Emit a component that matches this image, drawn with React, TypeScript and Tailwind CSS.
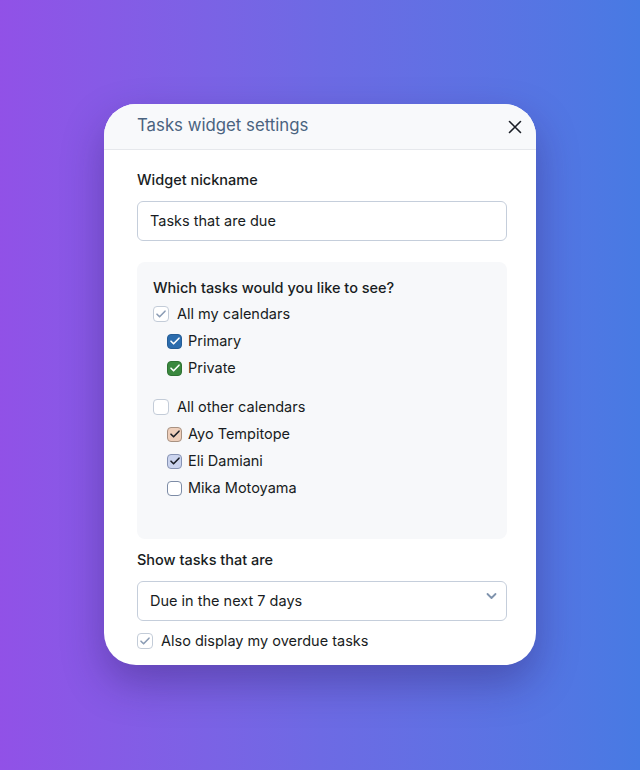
import React from "react";

type Box = {
  bg: string;
  border: string;
  check?: string;
};

function CheckBox({ box, size = 15 }: { box: Box; size?: number }) {
  return (
    <span
      className="flex shrink-0 items-center justify-center rounded-[4px] border"
      style={{ width: size, height: size, background: box.bg, borderColor: box.border }}
    >
      {box.check && (
        <svg width="12" height="12" viewBox="0 0 12 12" fill="none">
          <path d="M2 6.2l2.6 2.6 5.4-5.6" stroke={box.check} strokeWidth="1.6" strokeLinecap="round" strokeLinejoin="round" />
        </svg>
      )}
    </span>
  );
}

const soft: Box = { bg: "#ffffff", border: "#c3ccd8", check: "#8c9db5" };
const empty: Box = { bg: "#ffffff", border: "#c3ccd8" };

function TopRow({ box, label }: { box: Box; label: string }) {
  return (
    <div className="flex h-[22px] items-center gap-[8px]">
      <CheckBox box={box} size={16} />
      <span>{label}</span>
    </div>
  );
}

function SubRow({ box, label }: { box: Box; label: string }) {
  return (
    <div className="flex h-[22px] items-center gap-[6px] pl-[14px]">
      <CheckBox box={box} size={15} />
      <span>{label}</span>
    </div>
  );
}

export default function App() {
  return (
    <div
      className="flex min-h-[770px] w-full justify-center bg-gradient-to-r from-[#9151e7] via-[#6d6ae4] to-[#477ae3] pt-[104px] text-[14.5px] text-[#181c22]"
      style={{ fontFamily: "Inter, 'Noto Sans', sans-serif" }}
    >
      <div className="h-[561px] w-[432px] overflow-hidden rounded-[32px] bg-white shadow-[0_18px_40px_rgba(40,20,90,0.35)]">
        <div className="flex h-[46px] items-start justify-between border-b border-[#e6e8ec] bg-[#f8f9fb] pl-[33px] pr-[14px] pt-[9px]">
          <span className="text-[16.8px] leading-6 text-[#4a6380]">Tasks widget settings</span>
          <svg className="mt-[7px]" width="14" height="14" viewBox="0 0 14 14" fill="none">
            <path d="M1.5 1.5l11 11M12.5 1.5l-11 11" stroke="#1b1f27" strokeWidth="1.6" strokeLinecap="round" />
          </svg>
        </div>

        <div className="pl-[33px] pr-[29px] pt-[19px]">
          <div className="font-medium leading-[22px]">Widget nickname</div>
          <div className="mt-[10px] flex h-[40px] items-center rounded-[6px] border border-[#c5cedb] px-[12px]">
            Tasks that are due
          </div>

          <div className="mt-[21px] flex h-[277px] flex-col rounded-[8px] bg-[#f7f8fa] px-4 pt-[15px] leading-[22px]">
            <div className="font-medium">Which tasks would you like to see?</div>
            <div className="mt-[4px] flex flex-col gap-[5px]">
              <TopRow box={soft} label="All my calendars" />
              <SubRow box={{ bg: "#2b6cad", border: "#255d96", check: "#ffffff" }} label="Primary" />
              <SubRow box={{ bg: "#3a883e", border: "#2f7233", check: "#ffffff" }} label="Private" />
            </div>
            <div className="mt-[17px] flex flex-col gap-[5px]">
              <TopRow box={empty} label="All other calendars" />
              <SubRow box={{ bg: "#eecfbb", border: "#a89282", check: "#1b1f27" }} label="Ayo Tempitope" />
              <SubRow box={{ bg: "#cbd4ee", border: "#8794b4", check: "#1b1f27" }} label="Eli Damiani" />
              <SubRow box={{ bg: "#ffffff", border: "#7d8ca6" }} label="Mika Motoyama" />
            </div>
          </div>

          <div className="mt-[10px] font-medium leading-[22px]">Show tasks that are</div>
          <div className="mt-[10px] flex h-[40px] items-center justify-between rounded-[6px] border border-[#c5cedb] pl-[12px] pr-[9px]">
            <span>Due in the next 7 days</span>
            <svg className="-mt-[10px]" width="11" height="8" viewBox="0 0 11 8" fill="none">
              <path d="M1.5 2l4 4 4-4" stroke="#7f93ad" strokeWidth="1.8" strokeLinecap="round" strokeLinejoin="round" />
            </svg>
          </div>
          <div className="mt-[9px] flex h-[22px] items-center gap-[8px]">
            <CheckBox box={soft} size={16} />
            <span>Also display my overdue tasks</span>
          </div>
        </div>
      </div>
    </div>
  );
}
